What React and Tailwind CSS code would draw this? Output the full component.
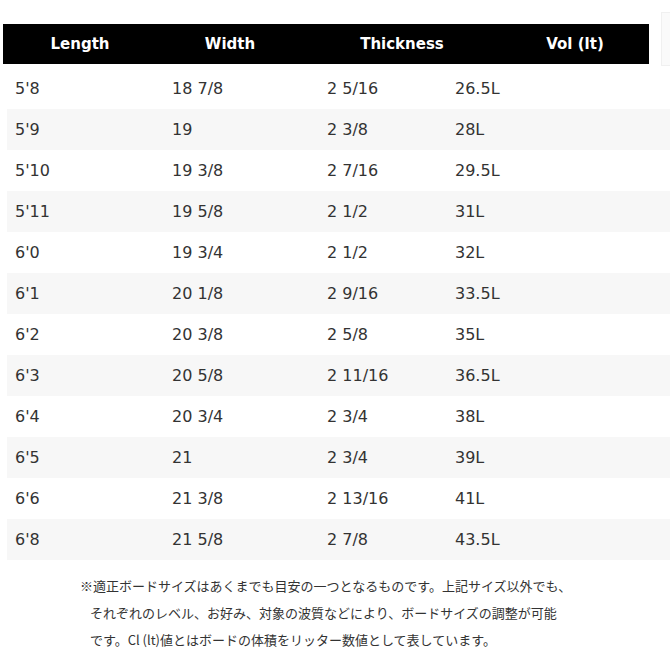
import React from "react";

const rows = [
  ["5'8", "18 7/8", "2 5/16", "26.5L"],
  ["5'9", "19", "2 3/8", "28L"],
  ["5'10", "19 3/8", "2 7/16", "29.5L"],
  ["5'11", "19 5/8", "2 1/2", "31L"],
  ["6'0", "19 3/4", "2 1/2", "32L"],
  ["6'1", "20 1/8", "2 9/16", "33.5L"],
  ["6'2", "20 3/8", "2 5/8", "35L"],
  ["6'3", "20 5/8", "2 11/16", "36.5L"],
  ["6'4", "20 3/4", "2 3/4", "38L"],
  ["6'5", "21", "2 3/4", "39L"],
  ["6'6", "21 3/8", "2 13/16", "41L"],
  ["6'8", "21 5/8", "2 7/8", "43.5L"],
];

export default function App() {
  return (
    <div className="w-[670px] h-[670px] overflow-hidden bg-white text-[#333] font-['DejaVu_Sans',sans-serif]">
      <div className="flex items-start">
        <div className="ml-[3px] mt-[24px] w-[646px] shrink-0 h-[40px] bg-black text-white font-bold text-[15px] grid grid-cols-[154px_146px_198px_1fr] items-center">
          <div className="text-center">Length</div>
          <div className="text-center">Width</div>
          <div className="text-center">Thickness</div>
          <div className="text-center">Vol (lt)</div>
        </div>
        <div className="ml-[12px] mt-[12px] h-[54px] w-[20px] shrink-0 bg-[#fafafa] border border-[#f0f0f0]"></div>
      </div>
      <div className="ml-[7px] mt-[2px]">
        {rows.map((r, i) => (
          <div
            key={i}
            className={`grid grid-cols-[157px_155px_128px_1fr] items-center h-[41px] text-[16px] ${i % 2 === 1 ? "bg-[#f7f7f7]" : "bg-white"}`}
          >
            {r.map((c, j) => (
              <div key={j} className="pl-[8px]">{c}</div>
            ))}
          </div>
        ))}
      </div>
      <div className="mt-[12px] text-[13px] leading-[27px] text-[#333] font-['Noto_Sans_CJK_JP',sans-serif]">
        <div className="pl-[80px]">※適正ボードサイズはあくまでも目安の一つとなるものです。上記サイズ以外でも、</div>
        <div className="pl-[90px]">それぞれのレベル、お好み、対象の波質などにより、ボードサイズの調整が可能</div>
        <div className="pl-[90px]">です。Cl (lt)値とはボードの体積をリッター数値として表しています。</div>
      </div>
    </div>
  );
}
